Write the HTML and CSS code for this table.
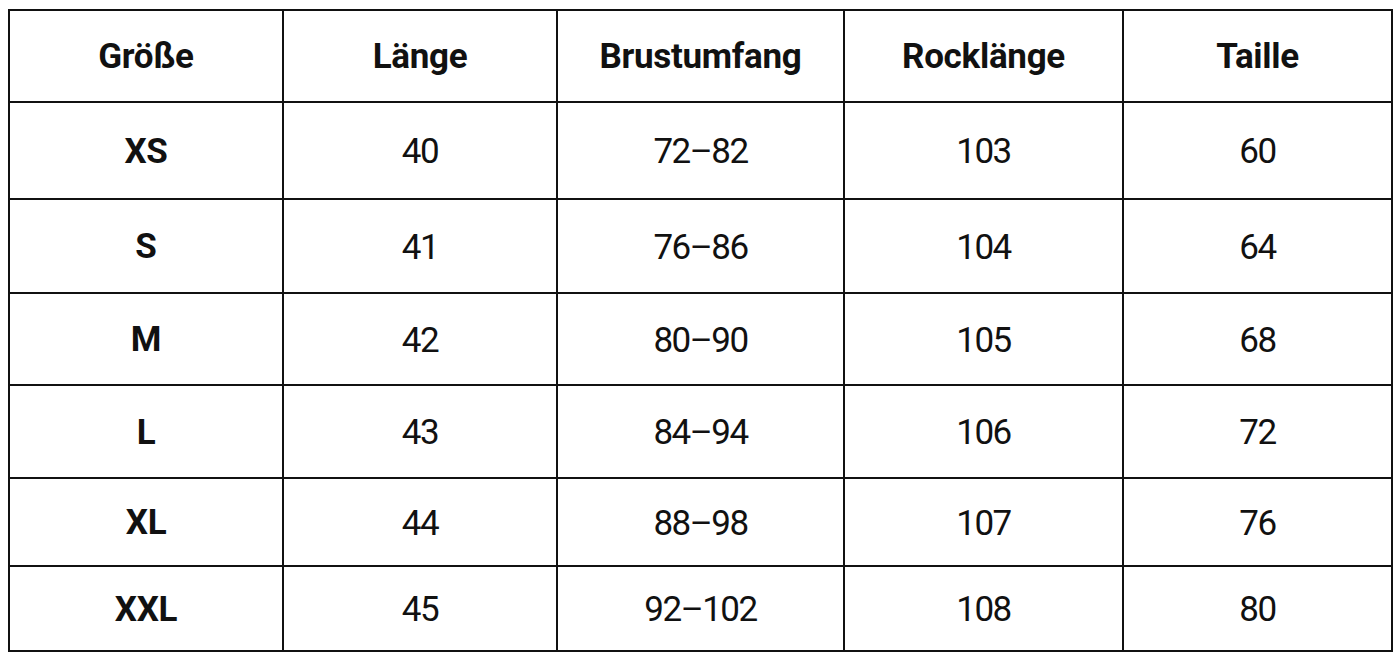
FILE: index.html
```html
<!DOCTYPE html>
<html lang="de">
<head>
<meta charset="utf-8">
<title>Größentabelle</title>
<link rel="stylesheet" href="styles.css">
</head>
<body>
<div class="size-table">
  <div class="cell head">Größe</div>
  <div class="cell head">Länge</div>
  <div class="cell head">Brustumfang</div>
  <div class="cell head">Rocklänge</div>
  <div class="cell head">Taille</div>

  <div class="cell label">XS</div>
  <div class="cell">40</div>
  <div class="cell">72–82</div>
  <div class="cell">103</div>
  <div class="cell">60</div>

  <div class="cell label">S</div>
  <div class="cell">41</div>
  <div class="cell">76–86</div>
  <div class="cell">104</div>
  <div class="cell">64</div>

  <div class="cell label">M</div>
  <div class="cell">42</div>
  <div class="cell">80–90</div>
  <div class="cell">105</div>
  <div class="cell">68</div>

  <div class="cell label">L</div>
  <div class="cell">43</div>
  <div class="cell">84–94</div>
  <div class="cell">106</div>
  <div class="cell">72</div>

  <div class="cell label">XL</div>
  <div class="cell">44</div>
  <div class="cell">88–98</div>
  <div class="cell">107</div>
  <div class="cell">76</div>

  <div class="cell label">XXL</div>
  <div class="cell">45</div>
  <div class="cell">92–102</div>
  <div class="cell">108</div>
  <div class="cell">80</div>
</div>
</body>
</html>
```

FILE: styles.css
```css
html, body {
  margin: 0;
  padding: 0;
  background: #ffffff;
}

body {
  padding: 9px 0 0 8px;
  font-family: Roboto, "Liberation Sans", sans-serif;
  color: #111111;
}

.size-table {
  display: grid;
  grid-template-columns: 272px 272px 285px 277px 267px;
  grid-template-rows: 90px 95px 92px 90px 91px 86px 83px;
  gap: 2px;
  padding: 2px;
  background: #111111;
  width: max-content;
}

.cell {
  background: #ffffff;
  display: flex;
  align-items: center;
  justify-content: center;
  font-size: 35px;
  font-weight: 400;
  line-height: 1;
  letter-spacing: -1.5px;
  padding-top: 2px;
}

.head,
.label {
  font-weight: 700;
  letter-spacing: -0.3px;
  padding-top: 1px;
}
```
